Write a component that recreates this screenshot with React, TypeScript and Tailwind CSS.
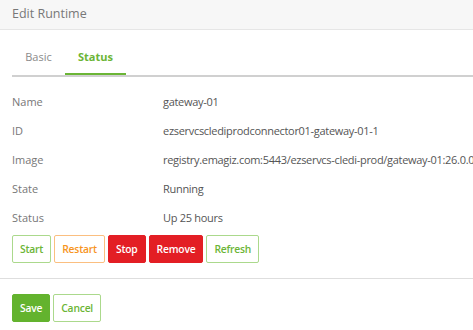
export default function App() {
  const rows: [string, string][] = [
    ['Name', 'gateway-01'],
    ['ID', 'ezservcsclediprodconnector01-gateway-01-1'],
    ['Image', 'registry.emagiz.com:5443/ezservcs-cledi-prod/gateway-01:26.0.0'],
    ['State', 'Running'],
    ['Status', 'Up 25 hours'],
  ];

  return (
    <div className="w-[473px] h-[330px] bg-white overflow-hidden font-['Open_Sans',sans-serif] text-[11px]">
      {/* Header */}
      <div className="h-[30px] bg-[#f7f7f7] border-b border-[#e6e6e6] px-3 flex items-center">
        <span className="text-[12.5px] text-[#787878]">Edit Runtime</span>
      </div>

      {/* Tabs */}
      <div className="ml-3 mt-[19px] flex border-b-2 border-[#d0d0d0]">
        <div className="w-[53px] h-[26px] flex items-start justify-center text-[#8a8a8a]">Basic</div>
        <div className="w-[61px] h-[26px] -mb-[2px] border-b-2 border-[#6bb536] flex items-start justify-center font-bold text-[#6bb536]">
          Status
        </div>
      </div>

      {/* Details */}
      <div className="mt-[11px] px-3">
        {rows.map(([label, value]) => (
          <div key={label} className="h-[29px] flex items-center">
            <div className="w-[151px] shrink-0 text-[#777]">{label}</div>
            <div className="text-[#555] text-[11px] whitespace-nowrap tracking-[-0.3px]">{value}</div>
          </div>
        ))}
        <div className="mt-[2px] flex gap-[3px]">
          <Btn className="border-[#abd98c] text-[#6bb536]">Start</Btn>
          <Btn className="border-[#fbbf80] text-[#f7941d]">Restart</Btn>
          <Btn className="border-[#e31e24] bg-[#e31e24] text-white">Stop</Btn>
          <Btn className="border-[#e31e24] bg-[#e31e24] text-white">Remove</Btn>
          <Btn className="border-[#abd98c] text-[#6bb536]">Refresh</Btn>
        </div>
      </div>

      <div className="mt-[15px] border-t border-[#dedede]" />

      <div className="mt-[15px] px-3 flex gap-[3px]">
        <Btn className="h-[27px] border-[#63b32e] bg-[#63b32e] text-white">Save</Btn>
        <Btn className="h-[27px] border-[#abd98c] text-[#6bb536]">Cancel</Btn>
      </div>
    </div>
  );
}

function Btn({ className, children }: { className: string; children: React.ReactNode }) {
  return (
    <button className={`h-[28px] px-[7px] border rounded-[2px] font-semibold text-[10.3px] tracking-[-0.2px] leading-none ${className}`}>
      {children}
    </button>
  );
}
